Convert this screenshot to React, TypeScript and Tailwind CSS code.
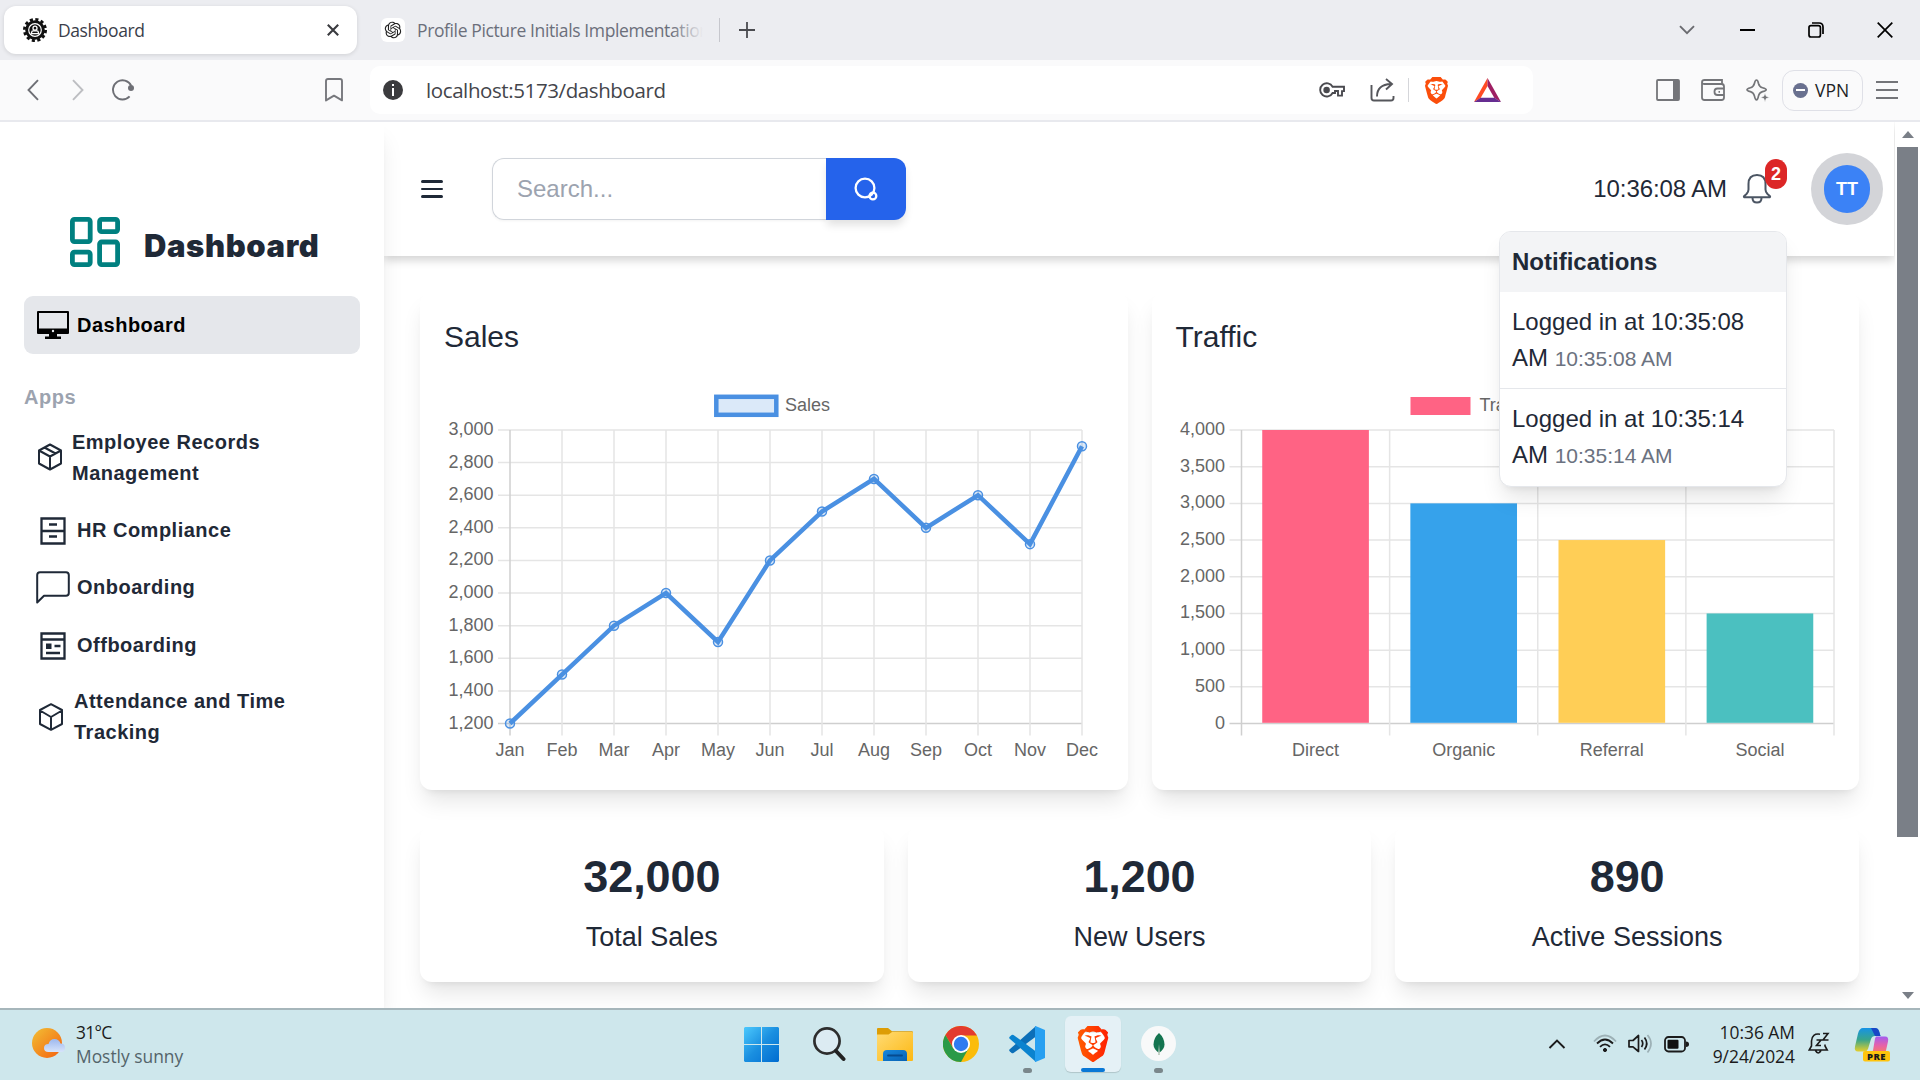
import React from "react";
import { SiBrave } from "react-icons/si";
import { RiOpenaiFill } from "react-icons/ri";

const months = ["Jan", "Feb", "Mar", "Apr", "May", "Jun", "Jul", "Aug", "Sep", "Oct", "Nov", "Dec"];
const sales = [1200, 1500, 1800, 2000, 1700, 2200, 2500, 2700, 2400, 2600, 2300, 2900];
const traffic = [
  { label: "Direct", value: 4000, color: "#FF6384" },
  { label: "Organic", value: 3000, color: "#36A2EB" },
  { label: "Referral", value: 2500, color: "#FFCE56" },
  { label: "Social", value: 1500, color: "#4BC0C0" },
];
const stats = [
  { value: "32,000", label: "Total Sales" },
  { value: "1,200", label: "New Users" },
  { value: "890", label: "Active Sessions" },
];
const notifications = ["10:35:08", "10:35:14"];

const GRID = "#e5e5e5";
const AXIS = "#cfcfcf";
const TOP = 48;
const BOTTOM = 341.5;

function SalesChart() {
  const left = 66;
  const right = 638;
  const x = (i: number) => left + (i * (right - left)) / 11;
  const y = (v: number) => BOTTOM - ((v - 1200) / 1800) * (BOTTOM - TOP);
  const ticks = Array.from({ length: 10 }, (_, i) => 1200 + i * 200);
  return (
    <svg width="660" height="384" className="block overflow-visible font-['Liberation_Sans',sans-serif] text-[18px]">
      {ticks.map((t, i) => (
        <g key={t}>
          <line x1={left - 12} x2={right} y1={y(t)} y2={y(t)} stroke={i ? GRID : AXIS} strokeWidth="1.5" />
          <text x={left - 16.5} y={y(t) + 5} textAnchor="end" fill="#666">{t.toLocaleString("en-US")}</text>
        </g>
      ))}
      {months.map((m, i) => (
        <g key={m}>
          <line x1={x(i)} x2={x(i)} y1={TOP} y2={BOTTOM + 12} stroke={i ? GRID : AXIS} strokeWidth="1.5" />
          <text x={x(i)} y={374} textAnchor="middle" fill="#666">{m}</text>
        </g>
      ))}
      <polyline points={sales.map((v, i) => `${x(i)},${y(v)}`).join(" ")} fill="none" stroke="#4A90E2" strokeWidth="4.5" />
      {sales.map((v, i) => (
        <circle key={i} cx={x(i)} cy={y(v)} r="4.5" fill="rgba(74,144,226,0.2)" stroke="#4A90E2" strokeWidth="1.5" />
      ))}
      <rect x="272.3" y="14.8" width="60" height="18" fill="#DBE9F9" stroke="#4A90E2" strokeWidth="4.5" />
      <text x="341" y="29" fill="#666">Sales</text>
    </svg>
  );
}

function TrafficChart() {
  const left = 65.5;
  const right = 658;
  const step = (right - left) / 4;
  const y = (v: number) => BOTTOM - (v / 4000) * (BOTTOM - TOP);
  const ticks = Array.from({ length: 9 }, (_, i) => i * 500);
  return (
    <svg width="659" height="384" className="block overflow-visible font-['Liberation_Sans',sans-serif] text-[18px]">
      {ticks.map((t, i) => (
        <g key={t}>
          <line x1={left - 12} x2={right} y1={y(t)} y2={y(t)} stroke={i ? GRID : AXIS} strokeWidth="1.5" />
          <text x={left - 16.5} y={y(t) + 5} textAnchor="end" fill="#666">{t.toLocaleString("en-US")}</text>
        </g>
      ))}
      {[0, 1, 2, 3, 4].map((i) => (
        <line key={i} x1={left + i * step} x2={left + i * step} y1={TOP} y2={BOTTOM + 12} stroke={i ? GRID : AXIS} strokeWidth="1.5" />
      ))}
      {traffic.map((b, i) => (
        <g key={b.label}>
          <rect x={left + step * (i + 0.14)} y={y(b.value)} width={step * 0.72} height={BOTTOM - y(b.value) - 0.7} fill={b.color} />
          <text x={left + step * (i + 0.5)} y={374} textAnchor="middle" fill="#666">{b.label}</text>
        </g>
      ))}
      <rect x="234.500" y="15" width="60" height="18" fill="#FF6384" />
      <text x="303.500" y="29" fill="#666">Traffic</text>
    </svg>
  );
}

function TabBar() {
  return (
    <div className="flex h-[60px] shrink-0 items-center bg-[#ecedf1] pl-1 font-['Open_Sans',sans-serif] text-[17.500px]">
      <div className="flex h-12 w-[353px] items-center rounded-[12px] bg-white pl-[19px] shadow-[0_1px_4px_rgba(0,0,0,0.12)]">
        <svg width="24" height="24" viewBox="0 0 24 24">
          <circle cx="12" cy="12" r="10.6" fill="none" stroke="#111" strokeWidth="2.8" strokeDasharray="3.1 2.45" />
          <circle cx="12" cy="12" r="9.8" fill="#111" />
          <circle cx="12" cy="12" r="6.3" fill="none" stroke="#fff" strokeWidth="1.2" />
          <circle cx="12" cy="10.2" r="2" fill="none" stroke="#fff" strokeWidth="1.3" />
          <path d="M8.6 15.6v-1.2q0-1.6 1.6-1.6h3.6q1.6 0 1.6 1.6v1.2z" fill="none" stroke="#fff" strokeWidth="1.3" />
        </svg>
        <span className="ml-[11px] grow tracking-[-0.42px] text-[#3b3e4a]">Dashboard</span>
        <svg width="12" height="12" viewBox="0 0 12 12" className="mr-[18px]">
          <path d="M.8.8l10.4 10.4M11.2.8.8 11.2" stroke="#3a3b3f" strokeWidth="2.1" />
        </svg>
      </div>
      <div className="ml-6 flex h-6 w-6 items-center justify-center rounded-md bg-white text-[#222]">
        <RiOpenaiFill size={20} />
      </div>
      <div className="relative ml-3 w-[286px] overflow-hidden whitespace-nowrap tracking-[-0.38px] text-[#6b6f7b]">
        Profile Picture Initials Implementation
        <div className="absolute inset-y-0 right-0 w-8 bg-gradient-to-r from-transparent to-[#ecedf1]" />
      </div>
      <div className="ml-4 h-6 w-px bg-[#c6c7cd]" />
      <svg width="16" height="16" viewBox="0 0 16 16" className="ml-[19px]">
        <path d="M8 0v16M0 8h16" stroke="#4a4b50" strokeWidth="1.8" />
      </svg>
      <div className="grow" />
      <svg width="16" height="10" viewBox="0 0 16 10" className="mr-[45px]">
        <path d="M1 1.2l7 7 7-7" fill="none" stroke="#6a6b70" strokeWidth="1.9" />
      </svg>
      <div className="mr-[53px] h-[2px] w-[15px] bg-black" />
      <svg width="16" height="16" viewBox="0 0 16 16" className="mr-[53px]" fill="none" stroke="#000" strokeWidth="1.7">
        <rect x="1" y="3.6" width="11.4" height="11.4" rx="2" />
        <path d="M4 1h7q4 0 4 4v7" />
      </svg>
      <svg width="16" height="16" viewBox="0 0 16 16" className="mr-[27px]">
        <path d="M.7.7l14.6 14.6M15.3.7.7 15.3" stroke="#000" strokeWidth="1.7" />
      </svg>
    </div>
  );
}

function Toolbar() {
  return (
    <div className="flex h-[62px] shrink-0 items-center border-b-2 border-[#e8e9ee] bg-[#fafafb] font-['Open_Sans',sans-serif]">
      <svg width="12" height="22" viewBox="0 0 12 22" className="ml-[27px]">
        <path d="M11 1.2 1.5 11 11 20.8" fill="none" stroke="#6e6f75" strokeWidth="1.9" />
      </svg>
      <svg width="12" height="22" viewBox="0 0 12 22" className="ml-[33px]">
        <path d="M1 1.2 10.5 11 1 20.8" fill="none" stroke="#bdbec2" strokeWidth="1.9" />
      </svg>
      <svg width="24" height="22" viewBox="0 0 24 22" className="ml-[27px]">
        <path d="M18.6 17.4A9.6 9.6 0 1 1 20.2 6.6" fill="none" stroke="#6e6f75" strokeWidth="1.9" />
        <circle cx="20" cy="9" r="3" fill="#6e6f75" />
      </svg>
      <svg width="18" height="24" viewBox="0 0 18 24" className="ml-[190px]">
        <path d="M1 3q0-2 2-2h12q2 0 2 2v19.4L9 17.6 1 22.4z" fill="none" stroke="#77787d" strokeWidth="1.9" strokeLinejoin="round" />
      </svg>
      <div className="ml-[27px] flex h-12 w-[1163px] items-center rounded-[10px] bg-white">
        <div className="ml-[13px] flex h-5 w-5 items-center justify-center rounded-full bg-[#3b3b3e]">
          <svg width="4" height="12" viewBox="0 0 4 12"><path d="M1 0h2v2H1zM1 4h2v8H1z" fill="#fff" /></svg>
        </div>
        <span className="mt-px ml-[23px] grow text-[20.500px] tracking-[-0.4px] text-[#44454b]">localhost:5173/dashboard</span>
        <svg width="26" height="18" viewBox="0 0 26 18" className="mr-[25px]" fill="none" stroke="#4a4a4f" strokeWidth="1.9">
          <path d="M13.600 5.800A6.600 6.600 0 1 0 13.600 12H16v-2h3v4.600h4v-4.500h2V5.800z" />
          <circle cx="7.600" cy="9" r="2.300" fill="#4a4a4f" />
        </svg>
        <svg width="25" height="24" viewBox="0 0 25 24" className="mr-[13px]" fill="none" stroke="#55565b" strokeWidth="1.9">
          <path d="M1.500 7v13q0 2.500 2.500 2.500h17q2.500 0 2.500-2.500v-2" />
          <path d="M7 18.500q0-12 14-12.500M16 1l6 5-6 5.500" />
        </svg>
        <div className="mr-[14px] h-6 w-[1.500px] bg-[#d5d6da]" />
        <SiBrave size={27} color="#fb4e0b" className="mr-[24px]" />
        <svg width="27" height="24" viewBox="0 0 27 24" className="mr-[32px]">
          <path d="M13.500 0 0 24l6.600-4L13.500 8z" fill="#ff4b24" />
          <path d="M13.500 0 27 24l-6.600-4L13.500 8z" fill="#9e1f63" />
          <path d="M0 24h27l-6.600-4.200H6.600z" fill="#662d91" />
        </svg>
      </div>
      <div className="grow" />
      <svg width="24" height="22" viewBox="0 0 24 22" className="mr-[21px]">
        <rect x="1" y="1" width="22" height="20" rx="1" fill="none" stroke="#747579" strokeWidth="1.8" />
        <path d="M17 1h6v20h-6z" fill="#747579" />
      </svg>
      <svg width="24" height="22" viewBox="0 0 24 22" className="mr-[21px]" fill="none" stroke="#747579" strokeWidth="1.8">
        <path d="M21 5V1H3.500Q1 1 1 3.200V18.500Q1 21 3.500 21h17q2.500 0 2.500-2.500V7.500Q23 5 20.500 5H3.500Q1 5 1 3.200" />
        <path d="M23 9.500h-6.500q-3 0-3 3v.500q0 3 3 3H23M17.500 12.800h1.500" />
      </svg>
      <svg width="24" height="24" viewBox="0 0 24 24" className="mr-[12px]">
        <path d="M10.500 2q1.300 0 2 3.500.800 3.300 4 4.200 3.700 1 3.700 2t-3.700 1.900q-3.200.900-4 4.300-.700 4-2 4t-2.100-4q-.800-3.400-4-4.300-3.400-.900-3.400-1.900t3.400-2q3.200-.900 4-4.200Q9.200 2 10.500 2z" fill="none" stroke="#747579" strokeWidth="1.700" />
        <path d="M19 15l1.200 3.200 3.300 1.200-3.300 1.200L19 24l-1.200-3.400-3.300-1.200 3.300-1.200z" fill="#747579" stroke="#fafafb" strokeWidth=".6" />
      </svg>
      <div className="mr-[13px] flex h-[41px] w-[81px] items-center rounded-[12px] border-[1.500px] border-[#dfe0e7] pl-[10px]">
        <div className="flex h-[15px] w-[15px] items-center justify-center rounded-full bg-[#69708f]">
          <div className="h-[2px] w-[9px] bg-white" />
        </div>
        <span className="ml-[7px] text-[17.500px] text-[#1d1e26]">VPN</span>
      </div>
      <div className="mr-[22px] flex w-[22px] flex-col gap-[6px]">
        <div className="h-[2px] bg-[#747579]" />
        <div className="h-[2px] bg-[#747579]" />
        <div className="h-[2px] bg-[#747579]" />
      </div>
    </div>
  );
}

function NavItem({ icon, children, indent }: { icon: React.ReactNode; children: React.ReactNode; indent: string }) {
  return (
    <div className="flex items-center">
      <div className="flex w-[52px] shrink-0 items-center justify-center">{icon}</div>
      <div className={indent}>{children}</div>
    </div>
  );
}

function Sidebar() {
  const line = { fill: "none", stroke: "#1f2937", strokeWidth: 2, strokeLinejoin: "round" as const, strokeLinecap: "round" as const };
  return (
    <aside className="z-20 flex w-[384px] shrink-0 flex-col bg-white px-6 text-[20px] font-semibold tracking-[0.5px] text-[#1f2937] shadow-[0_15px_22.500px_-4.500px_rgba(0,0,0,0.1),0_6px_9px_-6px_rgba(0,0,0,0.1)]">
      <div className="mt-[95px] flex h-[50px] items-center pl-[46px]">
        <svg width="50" height="50" viewBox="0 0 50 50" fill="none" stroke="#008080" strokeWidth="4.800">
          <rect x="2.400" y="2.400" width="17.800" height="22.200" rx="2" />
          <rect x="29.600" y="2.400" width="18" height="12.200" rx="2" />
          <rect x="2.400" y="35.200" width="17.800" height="12.400" rx="2" />
          <rect x="29.600" y="25" width="18" height="22.600" rx="2" />
        </svg>
        <span className="ml-[24px] mt-[8px] font-['Inter',sans-serif] text-[31px] font-black tracking-[0.6px]">Dashboard</span>
      </div>
      <div className="mt-[29px] flex h-[58px] items-center rounded-[9px] bg-[#e5e7eb] pl-[13px] text-black">
        <svg width="32" height="28" viewBox="0 0 32 28">
          <path fillRule="evenodd" d="M1 0h30q1 0 1 1v21q0 1-1 1H1q-1 0-1-1V1q0-1 1-1zM2 2v15.500h28V2zM16 18.800a1.200 1.200 0 1 0 0 2.400 1.200 1.200 0 0 0 0-2.400z" />
          <path d="M12 23h8v2.500h4V28H8v-2.500h4z" />
        </svg>
        <span className="ml-[8px]">Dashboard</span>
      </div>
      <div className="mt-[28px] leading-[30px] text-[#9ca3af]">Apps</div>
      <div className="mt-[15px] flex flex-col leading-[31px]">
        <NavItem
          indent="-ml-[4px]"
          icon={
            <svg width="26" height="28" viewBox="0 0 26 28" className="-mt-[3px]" {...line}>
              <path d="M13 1.500 24 7.500v13L13 26.500 2 20.500v-13zM2 7.500l11 6 11-6M13 13.500v13M7.500 4.500l11 6" />
            </svg>
          }
        >
          Employee Records
          <br />
          Management
        </NavItem>
        <div className="mt-[26px]">
          <NavItem
            indent="ml-[1px]"
            icon={
              <svg width="26" height="28" viewBox="0 0 26 28" fill="none" stroke="#1f2937" strokeWidth="2.300" className="ml-[5px]">
                <path d="M1.500 1.500h23v25h-23zM1.500 14h23M9 7.500h8M9 19.500h8" />
              </svg>
            }
          >
            HR Compliance
          </NavItem>
        </div>
        <div className="mt-[26px]">
          <NavItem
            indent="ml-[1px]"
            icon={
              <svg width="34" height="33" viewBox="0 0 34 33" {...line} className="-mt-1 mb-[-4px] ml-[5px]">
                <path d="M1.200 31.500V4Q1.200 1.200 4 1.200h26q2.800 0 2.800 2.800v18q0 2.800-2.800 2.800H8z" />
              </svg>
            }
          >
            Onboarding
          </NavItem>
        </div>
        <div className="mt-[27px]">
          <NavItem
            indent="ml-[1px]"
            icon={
              <svg width="26" height="28" viewBox="0 0 26 28" fill="none" stroke="#1f2937" strokeWidth="2.300" className="ml-[5px]">
                <path d="M1.500 1.500h23v25h-23zM1.500 7.500h23M14.500 14h6M6 21h14" />
                <path d="M6 11.500h5.500v5.500H6z" fill="#1f2937" stroke="none" />
              </svg>
            }
          >
            Offboarding
          </NavItem>
        </div>
        <div className="mt-[25px]">
          <NavItem
            indent="-ml-[2px]"
            icon={
              <svg width="26" height="28" viewBox="0 0 26 28" {...line} className="ml-0.5">
                <path d="M13 1.200 24 7v14L13 26.800 2 21V7zM2 7.500l11 6.500 11-6.500M13 14v12.500" />
              </svg>
            }
          >
            Attendance and Time
            <br />
            Tracking
          </NavItem>
        </div>
      </div>
    </aside>
  );
}

function NotificationMenu() {
  return (
    <div className="absolute right-0 top-[72px] z-30 w-[288px] overflow-hidden rounded-[12px] border-[1.500px] border-[#e5e7eb] bg-white shadow-[0_15px_22.500px_-4.500px_rgba(0,0,0,0.1),0_6px_9px_-6px_rgba(0,0,0,0.1)]">
      <div className="bg-[#f3f4f6] p-3 text-2xl leading-[36px] font-bold">Notifications</div>
      {notifications.map((t, i) => (
        <div key={t} className={i === 0 ? "border-b border-[#e5e7eb] p-3 pb-[11px] text-2xl leading-[36px]" : "p-3 text-2xl leading-[36px]"}>
          Logged in at {t} AM <span className="text-[21px] text-[#6b7280]">{t} AM</span>
        </div>
      ))}
    </div>
  );
}

function Header() {
  return (
    <header className="relative z-10 mr-px flex h-[134px] shrink-0 items-center bg-white shadow-[0_4px_9px_rgba(0,0,0,0.18)]">
      <div className="ml-[37px] flex w-[22px] flex-col gap-[5px]">
        <div className="h-[2.500px] rounded bg-[#1f2937]" />
        <div className="h-[2.500px] rounded bg-[#1f2937]" />
        <div className="h-[2.500px] rounded bg-[#1f2937]" />
      </div>
      <div className="ml-[49px] flex h-[62px] w-[414px]">
        <div className="flex grow items-center rounded-l-[12px] border border-r-0 border-[#d1d5db] pl-6 text-2xl text-[#9ca3af] shadow-[0_1px_3px_rgba(0,0,0,0.05)]">Search...</div>
        <div className="flex w-20 items-center justify-center rounded-r-[12px] bg-[#2563eb] shadow-[0_6px_9px_-1.500px_rgba(0,0,0,0.12)]">
          <svg width="24" height="24" viewBox="0 0 24 24" fill="none" stroke="#fff" strokeWidth="2.300">
            <circle cx="11" cy="11" r="9.400" />
            <circle cx="18.900" cy="19" r="3.400" />
          </svg>
        </div>
      </div>
      <div className="grow" />
      <div className="text-2xl tracking-[-0.1px] text-[#1f2937]">10:36:08 AM</div>
      <div className="relative ml-[16px] mr-[24px] flex h-[60px] w-[44px] items-center">
        <svg width="30" height="32" viewBox="0 0 30 32" fill="none" stroke="#4b5563" strokeWidth="2" strokeLinejoin="round" className="-ml-px">
          <path d="M15 2C9.500 2 6.500 5.500 6.500 11v5.500q0 2.500-2 4.500L2 23.200q-.500 1 1 1h24q1.500 0 1-1L25.500 21q-2-2-2-4.500V11C23.500 5.500 20.500 2 15 2zM10.500 25q0 4.500 4.500 4.500t4.500-4.500" />
        </svg>
        <div className="absolute right-0 top-0 flex h-[30px] w-[22px] items-center justify-center rounded-full bg-[#dc2626] text-[18px] font-bold text-white">2</div>
        <NotificationMenu />
      </div>
      <div className="mr-[11px] flex h-[72px] w-[72px] items-center justify-center rounded-full bg-[#d3d4d8]">
        <div className="flex h-12 w-[46px] items-center justify-center rounded-full bg-[#3b82f6] text-[18px] font-bold text-white">TT</div>
      </div>
    </header>
  );
}

function Page() {
  return (
    <main className="flex w-[1511px] shrink-0 flex-col text-[#1f2937]">
      <Header />
      <div className="grid grid-cols-2 gap-6 px-9 pt-9">
        <section className="h-[498px] rounded-[12px] bg-white p-6 shadow-[0_15px_22.500px_-4.500px_rgba(0,0,0,0.1),0_6px_9px_-6px_rgba(0,0,0,0.1)]">
          <h2 className="mb-6 text-[30px] leading-[42px]">Sales</h2>
          <SalesChart />
        </section>
        <section className="h-[498px] rounded-[12px] bg-white p-6 shadow-[0_15px_22.500px_-4.500px_rgba(0,0,0,0.1),0_6px_9px_-6px_rgba(0,0,0,0.1)]">
          <h2 className="mb-6 text-[30px] leading-[42px]">Traffic</h2>
          <TrafficChart />
        </section>
      </div>
      <div className="grid grid-cols-3 gap-6 px-9 pt-9">
        {stats.map((s) => (
          <div key={s.label} className="h-[156px] rounded-[12px] bg-white p-6 text-center shadow-[0_15px_22.500px_-4.500px_rgba(0,0,0,0.1),0_6px_9px_-6px_rgba(0,0,0,0.1)]">
            <div className="text-[45px] leading-[54px] font-bold tracking-[-0.1px]">{s.value}</div>
            <div className="mt-3 text-[27px] leading-[42px]">{s.label}</div>
          </div>
        ))}
      </div>
    </main>
  );
}

function Scrollbar() {
  return (
    <div className="z-20 flex w-[25px] shrink-0 flex-col items-center bg-white pt-[9px] pb-[9px]">
      <svg width="12" height="7" viewBox="0 0 12 7"><path d="M6 0l6 7H0z" fill="#7a7f87" /></svg>
      <div className="mt-[9px] h-[690px] w-[21px] bg-[#7a7f87]" />
      <div className="grow" />
      <svg width="12" height="7" viewBox="0 0 12 7"><path d="M0 0h12L6 7z" fill="#7a7f87" /></svg>
    </div>
  );
}

function Taskbar() {
  return (
    <div className="flex h-[72px] shrink-0 items-start border-t-2 border-[#a6b6bb] bg-[#cee7ec] font-['Open_Sans',sans-serif] text-[17.400px] leading-[24px] text-[#1b1b1b]">
      <svg width="34" height="32" viewBox="0 0 34 32" className="mt-[17px] ml-[32px]">
        <defs>
          <linearGradient id="sun" x1="0" y1="0" x2="1" y2="1"><stop stopColor="#f2c035" /><stop offset="1" stopColor="#f4600e" /></linearGradient>
          <linearGradient id="cloud" x1="0" y1="0" x2="0" y2="1"><stop stopColor="#9db8ee" /><stop offset="1" stopColor="#d7e4fb" /></linearGradient>
        </defs>
        <circle cx="15" cy="16" r="15" fill="url(#sun)" />
        <path d="M16.500 25q-4.500 0-4.500-4t4.500-4q1.500-5 6-5t6 4.500q4.500 0 4.500 4.300T29 25z" fill="url(#cloud)" />
      </svg>
      <div className="mt-[10px] ml-[10px] w-[200px]">
        <div className="tracking-[-0.7px]">31°C</div>
        <div className="text-[#54646a]">Mostly sunny</div>
      </div>
      <div className="ml-[468px] flex">
        <svg width="35" height="35" viewBox="0 0 35 35" className="mt-[17px]">
          <defs><linearGradient id="win" x1="0" y1="0" x2="1" y2="1"><stop stopColor="#4cc9fd" /><stop offset=".5" stopColor="#1a8fe0" /><stop offset="1" stopColor="#006cd0" /></linearGradient></defs>
          <path d="M1 0h16v17H0V1zM18 0h16l1 1v16H18zM0 18h17v17H1l-1-1zM18 18h17v16l-1 1H18z" fill="url(#win)" />
        </svg>
        <svg width="33" height="35" viewBox="0 0 33 35" className="mt-[17px] ml-[34px]">
          <circle cx="14" cy="14" r="12.600" fill="#dcebf2" stroke="#2d2d2d" strokeWidth="2.700" />
          <path d="M23 24l7.500 8" stroke="#222" strokeWidth="4" strokeLinecap="round" />
        </svg>
        <svg width="36" height="33" viewBox="0 0 36 33" className="mt-[18px] ml-[31px]">
          <defs>
            <linearGradient id="fold" x1="0" y1="0" x2="1" y2="1"><stop stopColor="#ffdb74" /><stop offset="1" stopColor="#fdb813" /></linearGradient>
            <linearGradient id="pocket" x1="0" y1="0" x2="1" y2="1"><stop stopColor="#1787dc" /><stop offset="1" stopColor="#0862b4" /></linearGradient>
          </defs>
          <path d="M0 1q0-1 1-1h10l4 3.300h20q1 0 1 1V10H0z" fill="#dd9d05" />
          <path d="M0 6.500h11.500L15 4h20q1 0 1 1v27q0 1-1 1H1q-1 0-1-1z" fill="url(#fold)" />
          <path d="M6 33v-7q0-4 4-4h16q4 0 4 4v7z" fill="url(#pocket)" />
          <path d="M11 27.500h14" stroke="#064b8f" strokeWidth="1.800" strokeLinecap="round" />
        </svg>
        <svg width="36" height="36" viewBox="0 0 36 36" className="mt-[16px] ml-[30px]">
          <circle cx="18" cy="18" r="18" fill="#fbbc0a" />
          <path d="M2.400 9A18 18 0 0 1 33.600 9L34 9.500H18L10.500 22.500z" fill="#e33b2e" />
          <path d="M2.400 9A18 18 0 0 0 18 36L25.500 22.500H10.300z" fill="#2a9a48" />
          <circle cx="18" cy="18" r="9" fill="#fff" />
          <circle cx="18" cy="18" r="7.200" fill="#2f7bf0" />
        </svg>
        <div className="mt-[16px] ml-[30px] flex w-[36px] flex-col items-center">
          <svg width="36" height="36" viewBox="0 0 36 36">
            <path d="M27 0v10.500L4.500 27q-1 .700-1.900 0L.7 25.300q-1-1 0-2z" fill="#0c6fb8" />
            <path d="M27 36V25.500L4.500 9q-1-.700-1.900 0L.7 10.700q-1 1 0 2z" fill="#0b83cf" />
            <path d="M26.500 0 36 4v28l-9.500 4q-1 0-.5-1.500V1.500q-.500-1 .5-1.500z" fill="#27a0f1" />
          </svg>
          <div className="mt-[6px] h-[5px] w-[9px] rounded-full bg-[#7a878b]" />
        </div>
        <div className="mt-[6px] ml-[20px] flex h-[56px] w-[56px] flex-col items-center rounded-[6px] bg-[#e5f1f6] shadow-[0_1px_1px_rgba(0,0,0,0.15)]">
          <div className="relative mt-[10px] h-[36px] w-[36px]">
            <svg width="36" height="36" viewBox="0 0 36 36" className="absolute inset-0">
              <defs><linearGradient id="brave" gradientUnits="userSpaceOnUse" x1="2" y1="0" x2="22" y2="0"><stop stopColor="#ff5c01" /><stop offset="1" stopColor="#ff2002" /></linearGradient></defs>
              <path d="M9 7h18l3.500 7-3 10L18 31l-9.500-7-3-10z" fill="#fff" />
            </svg>
            <SiBrave size={36} fill="url(#brave)" className="relative" />
          </div>
          <div className="mt-[5.500px] h-[4.500px] w-[24px] rounded-full bg-[#0a78d6]" />
        </div>
        <div className="mt-[16px] ml-[20px] flex w-[35px] flex-col items-center">
          <div className="flex h-[35px] w-[35px] items-center justify-center rounded-full bg-[#f8f9f9]">
            <svg width="12" height="22" viewBox="0 0 12 22">
              <path d="M6 0q5.500 5 5.500 11.500Q11.500 16 6 20 .500 16 .500 11.500.500 5 6 0z" fill="#14744f" />
              <path d="M6 11l1 11H5z" fill="#c2cfc4" />
            </svg>
          </div>
          <div className="mt-[7px] h-[5px] w-[9px] rounded-full bg-[#7a878b]" />
        </div>
      </div>
      <div className="grow" />
      <svg width="18" height="10" viewBox="0 0 18 10" className="mt-[29px] mr-[27px]"><path d="M1.500 9 9 1.500 16.500 9" fill="none" stroke="#1b1b1b" strokeWidth="1.900" /></svg>
      <svg width="24" height="20" viewBox="0 0 24 20" className="mt-[24px] mr-[11px]" fill="none" stroke="#1b1b1b" strokeWidth="1.800">
        <path d="M1 7.500q11-12 22 0" stroke="#9db1b6" />
        <path d="M4 9.500q8-8 16 0M7 12.800q5-5 10 0" />
        <circle cx="12" cy="16" r="1.600" fill="#1b1b1b" strokeWidth="1" />
      </svg>
      <svg width="25" height="20" viewBox="0 0 25 20" className="mt-[24px] mr-[11px]" fill="none" stroke="#1b1b1b" strokeWidth="1.700" strokeLinejoin="round">
        <path d="M1 6.500h4L10.500 1.500v16L5 12.800H1z" />
        <path d="M13.500 6q2.500 3.500 0 7M16.500 3.500q4.500 6 0 12" />
        <path d="M19.500 1q7 8.500 0 17.500" stroke="#9db1b6" />
      </svg>
      <svg width="25" height="17" viewBox="0 0 25 17" className="mt-[26px] mr-[24px]">
        <rect x="1" y="1" width="20" height="14.500" rx="3.500" fill="none" stroke="#1b1b1b" strokeWidth="1.800" />
        <rect x="3.500" y="3.700" width="11" height="9" rx="1" fill="#111" />
        <path d="M22 5.500q3 0 3 2.700t-3 2.700z" fill="#1b1b1b" />
      </svg>
      <div className="mt-[10px] text-right whitespace-nowrap">
        <div>10:36 AM</div>
        <div>9/24/2024</div>
      </div>
      <svg width="22" height="23" viewBox="0 0 22 23" className="mt-[22px] ml-[13px]" fill="none" stroke="#1b1b1b" strokeWidth="1.600">
        <path d="M12 2.200Q4 1 3.500 9v5L1.200 18h18L17 14v-1.500M7.500 18.500q2.700 5 5.400 0" />
        <path d="M8.500 8h4.500l-4.500 5.500H13M15 1.500h5L15 8h5.500" />
      </svg>
      <svg width="36" height="36" viewBox="0 0 36 36" className="mt-[17px] mr-[30px] ml-[24px]">
        <defs>
          <linearGradient id="cpA" x1="0" y1="0" x2="0" y2="1"><stop stopColor="#1693e6" /><stop offset=".5" stopColor="#38a58c" /><stop offset="1" stopColor="#e6cf2a" /></linearGradient>
          <linearGradient id="cpB" x1="0" y1="0" x2="0" y2="1"><stop stopColor="#a35cf0" /><stop offset=".5" stopColor="#e662a8" /><stop offset="1" stopColor="#fb8258" /></linearGradient>
        </defs>
        <path d="M9 1h12q3 0 4 3l1.500 5H21q-3 0-4 3l-3 10q-1 2.500-4 2.500H4q-4 0-3-5l3-13Q5.500 1 9 1z" fill="url(#cpA)" />
        <path d="M17 1h4q3 0 4 3l1.500 5H21z" fill="#1747c6" />
        <path d="M22 9.500h9q4 0 3 5l-2 9q-1 4-5 4H15q3-1 4-4l2-12z" fill="url(#cpB)" />
        <rect x="9" y="24" width="27" height="10.500" rx="2" fill="#ffc40c" />
        <text x="22.500" y="32.600" textAnchor="middle" fontSize="9.500" fontWeight="800" fill="#1b1b1b" letterSpacing=".5">PRE</text>
      </svg>
    </div>
  );
}

export default function App() {
  return (
    <div className="flex h-[1080px] w-[1920px] flex-col overflow-hidden bg-white font-['Liberation_Sans',Arial,sans-serif]">
      <TabBar />
      <Toolbar />
      <div className="flex h-[886px] shrink-0 overflow-hidden">
        <Sidebar />
        <Page />
        <Scrollbar />
      </div>
      <Taskbar />
    </div>
  );
}
